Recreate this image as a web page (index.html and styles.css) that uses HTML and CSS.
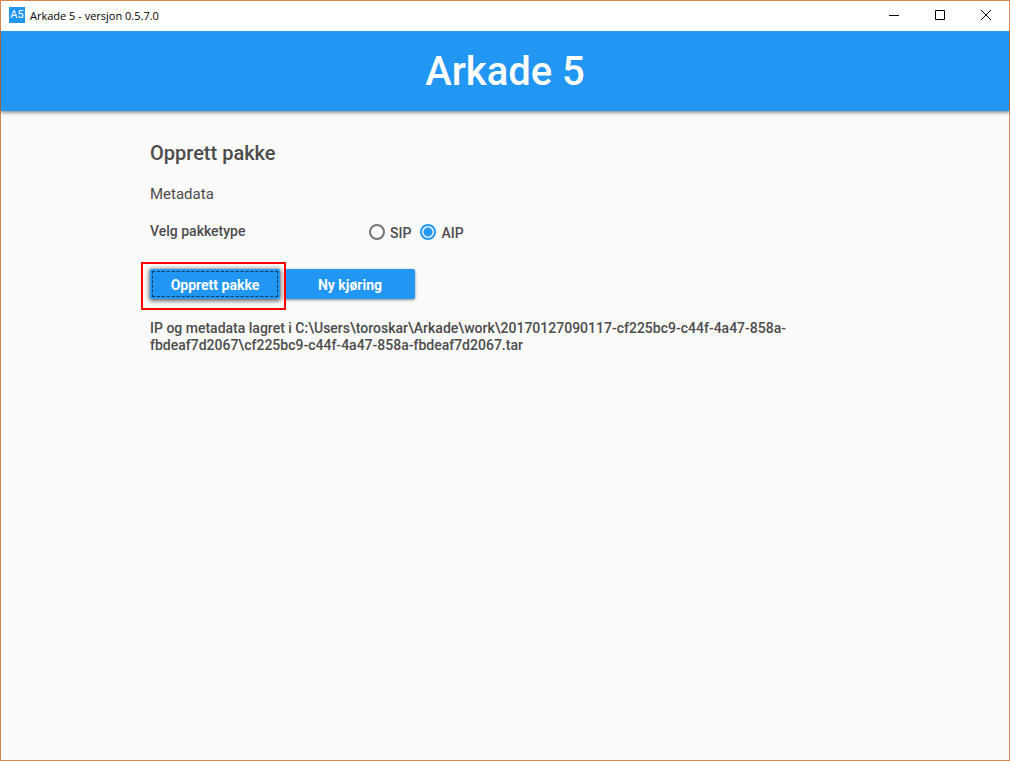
FILE: index.html
```html
<!DOCTYPE html>
<html lang="nb">
<head>
<meta charset="utf-8">
<meta name="viewport" content="width=device-width, initial-scale=1">
<title>Arkade 5 - versjon 0.5.7.0</title>
<link rel="stylesheet" href="styles.css">
</head>
<body>
<div class="window">
  <div class="titlebar">
    <span class="app-icon">A5</span>
    <span class="window-title">Arkade 5 - versjon 0.5.7.0</span>
    <div class="window-controls">
      <button type="button" class="window-button" aria-label="Minimer"><svg width="10" height="10" viewBox="0 0 10 10"><path d="M0 5.500H10"/></svg></button>
      <button type="button" class="window-button" aria-label="Maksimer"><svg width="10" height="10" viewBox="0 0 10 10"><path d="M.5 .5H9.500V9.500H.5Z"/></svg></button>
      <button type="button" class="window-button" aria-label="Lukk"><svg width="10" height="10" viewBox="0 0 10 10"><path d="M0 0L10 10M10 0L0 10"/></svg></button>
    </div>
  </div>
  <header class="banner"><h1 class="banner-title">Arkade 5</h1></header>
  <main class="content">
    <h2 class="heading">Opprett pakke</h2>
    <h3 class="subheading">Metadata</h3>
    <div class="field" role="radiogroup" aria-labelledby="type-label">
      <span class="field-label" id="type-label">Velg pakketype</span>
      <div class="options">
        <label class="option" for="sip"><input class="radio" type="radio" name="type" id="sip">SIP</label>
        <label class="option" for="aip"><input class="radio" type="radio" name="type" id="aip" checked>AIP</label>
      </div>
    </div>
    <div class="actions">
      <div class="highlight"><button type="button" class="button button-focused">Opprett pakke</button></div>
      <button type="button" class="button">Ny kjøring</button>
    </div>
    <p class="status">IP og metadata lagret i C:\Users\toroskar\Arkade\work\20170127090117-cf225bc9-c44f-4a47-858a-fbdeaf7d2067\cf225bc9-c44f-4a47-858a-fbdeaf7d2067.tar</p>
  </main>
</div>
</body>
</html>
```

FILE: styles.css
```css
* { box-sizing: border-box; }
body {
  margin: 0;
  font-family: Roboto, sans-serif;
  font-size: 14px;
  font-weight: 500;
  color: #4c4c4c;
}
h1, h2, h3, p { margin: 0; }
.window {
  display: flex;
  flex-direction: column;
  min-height: 100vh;
  border: 1px solid #d68550;
  background: #fafafa;
}
.titlebar {
  position: relative;
  z-index: 1;
  display: flex;
  align-items: center;
  height: 30px;
  padding: 0 0 2px 8px;
  background: #fff;
  color: #000;
}
.app-icon {
  width: 16px;
  margin-right: 5px;
  background: #2196f3;
  color: #fff;
  font-size: 11px;
  font-weight: 400;
  line-height: 16px;
  text-align: center;
}
.window-title {
  font-family: "Open Sans", sans-serif;
  font-size: 11px;
  font-weight: 400;
}
.window-controls {
  display: flex;
  align-self: stretch;
  margin-left: auto;
}
.window-button {
  display: flex;
  align-items: center;
  justify-content: center;
  width: 46px;
  padding: 0;
  border: 0;
  background: none;
}
.window-button path { fill: none; stroke: #000; }
.banner {
  padding: 17px 16px 15px;
  background: #2196f3;
  box-shadow: 0 1px 4px rgba(0, 0, 0, .6);
  text-align: center;
}
.banner-title {
  color: #fff;
  font-size: 40px;
  font-weight: 500;
  line-height: 48px;
}
.content { padding: 30px 149px; }
.heading {
  font-size: 20px;
  font-weight: 500;
  line-height: 24px;
}
.subheading {
  margin-top: 20px;
  font-size: 15px;
  font-weight: 400;
  line-height: 18px;
}
.field {
  display: flex;
  align-items: flex-start;
  margin-top: 19px;
  line-height: 18px;
}
.field-label { width: 219px; }
.options {
  display: flex;
  gap: 9px;
  padding-top: 2px;
}
.option {
  display: flex;
  align-items: flex-start;
  gap: 5px;
}
.radio {
  appearance: none;
  width: 16px;
  height: 16px;
  margin: 0;
  border: 2px solid #757575;
  border-radius: 50%;
}
.radio:checked {
  border-color: #2196f3;
  background: radial-gradient(circle, #2196f3 4px, transparent 5px);
}
.actions {
  display: flex;
  gap: 5px;
  margin-top: 27px;
}
.highlight { position: relative; }
.highlight::after {
  content: "";
  position: absolute;
  inset: -7px -6px -11px -9px;
  border: 2px solid #f00;
  pointer-events: none;
}
.button {
  min-width: 130px;
  height: 30px;
  padding: 2px 16px 0;
  border: 0;
  border-radius: 2px;
  background: #2196f3;
  box-shadow: 0 1px 3px rgba(0, 0, 0, .45);
  color: #fff;
  font: 700 14px Roboto, sans-serif;
}
.button-focused {
  box-shadow: 0 1px 4px 1px rgba(0, 0, 0, .6);
  outline: 1px dashed #0d3c61;
  outline-offset: -3px;
}
.status {
  margin-top: 21px;
  line-height: 17px;
}
```
